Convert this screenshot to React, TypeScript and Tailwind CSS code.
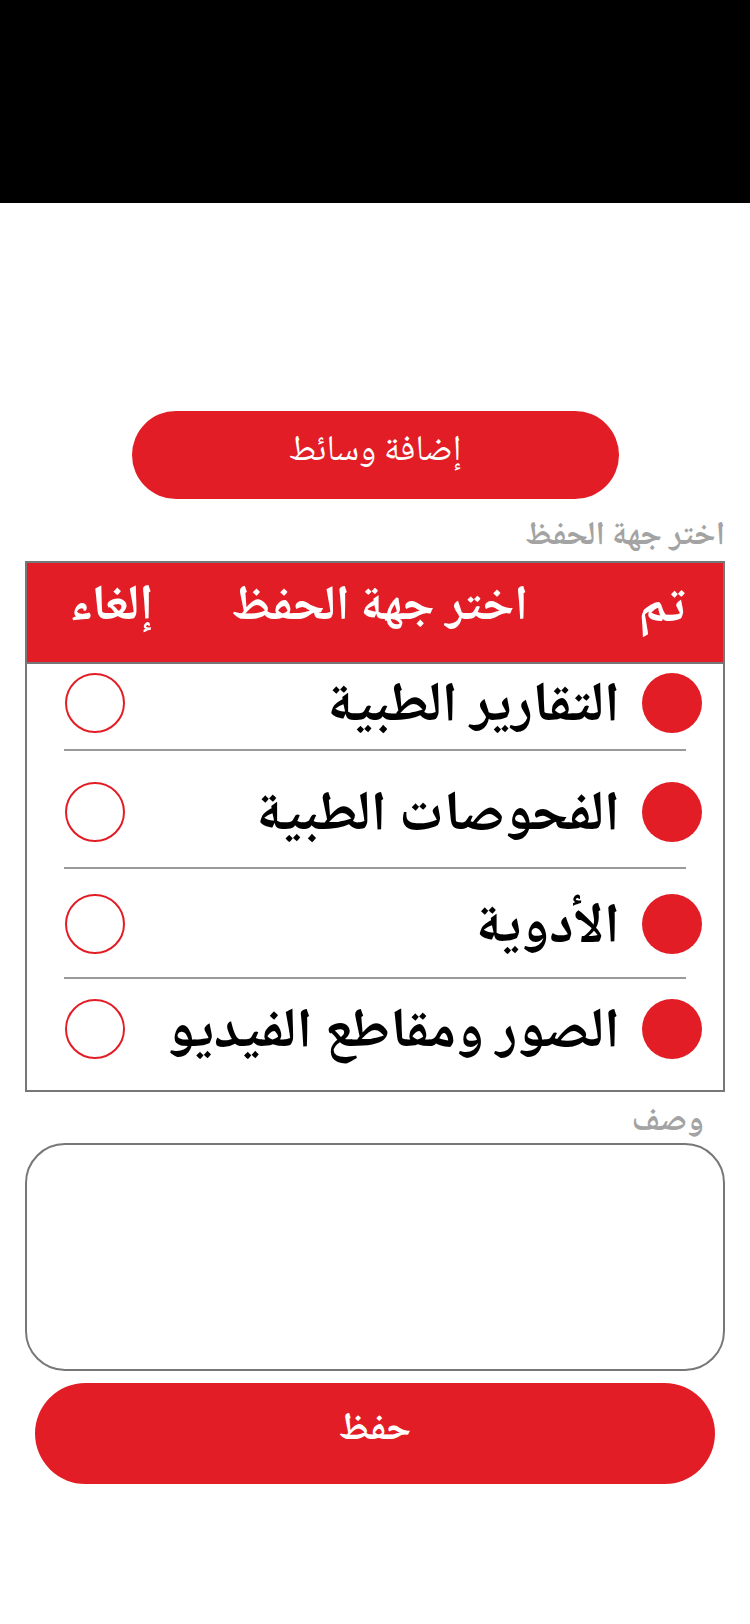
const items = [
  { label: 'التقارير الطبية', h: 'h-[87px]', pad: 'pb-[8px]' },
  { label: 'الفحوصات الطبية', h: 'h-[118px]', pad: 'pt-[6px]' },
  { label: 'الأدوية', h: 'h-[110px]', pad: 'pt-[2px]' },
  { label: 'الصور ومقاطع الفيديو', h: 'h-[111px]', pad: 'pb-[12px]' },
]

function Row({ label, h, pad, last }: { label: string; h: string; pad: string; last: boolean }) {
  return (
    <div className="px-[37px]">
      <div className={`flex items-center ${h} ${pad} ${last ? '' : 'border-b-2 border-[#9a9a9a]'}`}>
        <div className="-mr-[16px] w-[60px] h-[60px] rounded-full bg-[#e21d25] shrink-0" />
        <span className="mr-[22px] text-[56px] font-bold text-black leading-none whitespace-nowrap pt-[12px]">{label}</span>
        <div className="mr-auto ml-[1px] w-[60px] h-[60px] rounded-full border-2 border-[#e21d25] shrink-0" />
      </div>
    </div>
  )
}

export default function App() {
  return (
    <div dir="rtl" className="min-h-screen bg-white [font-family:Noto_Naskh_Arabic,Amiri,serif]">
      <div className="h-[203px] bg-black" />

      <div className="mt-[208px] flex justify-center">
        <button className="w-[487px] h-[88px] rounded-full bg-[#e21d25] text-white text-[36px] leading-none pb-[4px]">
          إضافة وسائط
        </button>
      </div>

      <div className="mx-[25px] mt-[14px] text-[33px] font-bold text-[#a3a3a3] leading-[48px]">
        اختر جهة الحفظ
      </div>

      <div className="mx-[25px] border-2 border-[#777777]">
        <div className="h-[101px] bg-[#e21d25] border-b-2 border-[#777777] flex items-center justify-between pr-[38px] pl-[42px] text-white font-bold leading-none">
          <span className="text-[52px] pb-[6px]">تم</span>
          <span className="text-[49px] pb-[8px] mr-[32px]">اختر جهة الحفظ</span>
          <span className="text-[50px] pb-[8px]">إلغاء</span>
        </div>
        {items.map((it, i) => (
          <Row key={it.label} {...it} last={i === items.length - 1} />
        ))}
      </div>

      <div className="mr-[46px] mt-[11px] text-[34px] font-bold text-[#a3a3a3] leading-[40px]">
        وصف
      </div>

      <div className="mx-[25px] h-[228px] rounded-[40px] border-2 border-[#777777]" />

      <div className="mt-[12px] mx-[35px]">
        <button className="w-full h-[101px] rounded-full bg-[#e21d25] text-white text-[38px] font-bold leading-none pb-[6px]">
          حفظ
        </button>
      </div>
    </div>
  )
}
